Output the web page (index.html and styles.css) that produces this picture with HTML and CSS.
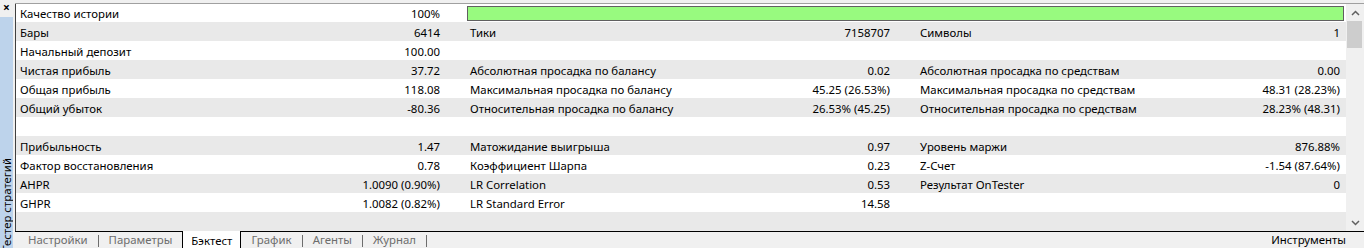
FILE: index.html
```html
<!DOCTYPE html>
<html>
<head>
    <title>Тестер стратегий</title>
    <link rel="stylesheet" href="styles.css">
</head>
<body>
<div class="window">
    <div class="side">
        <div class="close">&#215;</div>
        <div class="side-title"><span>Тестер стратегий</span></div>
    </div>
    <div class="main">
        <div class="panel">
            <div class="grid">
                <div class="row first">
                    <div class="cell"><span>Качество истории</span><span>100%</span></div>
                    <div class="quality"></div>
                </div>
                <div class="row">
                    <div class="cell"><span>Бары</span><span>6414</span></div>
                    <div class="cell"><span>Тики</span><span>7158707</span></div>
                    <div class="cell last"><span>Символы</span><span>1</span></div>
                </div>
                <div class="row">
                    <div class="cell"><span>Начальный депозит</span><span>100.00</span></div>
                </div>
                <div class="row">
                    <div class="cell"><span>Чистая прибыль</span><span>37.72</span></div>
                    <div class="cell"><span>Абсолютная просадка по балансу</span><span>0.02</span></div>
                    <div class="cell last"><span>Абсолютная просадка по средствам</span><span>0.00</span></div>
                </div>
                <div class="row">
                    <div class="cell"><span>Общая прибыль</span><span>118.08</span></div>
                    <div class="cell"><span>Максимальная просадка по балансу</span><span>45.25 (26.53%)</span></div>
                    <div class="cell last"><span>Максимальная просадка по средствам</span><span>48.31 (28.23%)</span></div>
                </div>
                <div class="row">
                    <div class="cell"><span>Общий убыток</span><span>-80.36</span></div>
                    <div class="cell"><span>Относительная просадка по балансу</span><span>26.53% (45.25)</span></div>
                    <div class="cell last"><span>Относительная просадка по средствам</span><span>28.23% (48.31)</span></div>
                </div>
                <div class="row"></div>
                <div class="row">
                    <div class="cell"><span>Прибыльность</span><span>1.47</span></div>
                    <div class="cell"><span>Матожидание выигрыша</span><span>0.97</span></div>
                    <div class="cell last"><span>Уровень маржи</span><span>876.88%</span></div>
                </div>
                <div class="row">
                    <div class="cell"><span>Фактор восстановления</span><span>0.78</span></div>
                    <div class="cell"><span>Коэффициент Шарпа</span><span>0.23</span></div>
                    <div class="cell last"><span>Z-Счет</span><span>-1.54 (87.64%)</span></div>
                </div>
                <div class="row">
                    <div class="cell"><span>AHPR</span><span>1.0090 (0.90%)</span></div>
                    <div class="cell"><span>LR Correlation</span><span>0.53</span></div>
                    <div class="cell last"><span>Результат OnTester</span><span>0</span></div>
                </div>
                <div class="row">
                    <div class="cell"><span>GHPR</span><span>1.0082 (0.82%)</span></div>
                    <div class="cell"><span>LR Standard Error</span><span>14.58</span></div>
                </div>
                <div class="row"></div>
            </div>
            <div class="scrollbar">
                <div class="arrow">
                    <svg width="9" height="6" viewBox="0 0 9 6"><path d="M1 5 L4.5 1.5 L8 5" fill="none" stroke="#606060" stroke-width="1.5"/></svg>
                </div>
                <div class="thumb"></div>
                <div class="track"></div>
                <div class="arrow">
                    <svg width="9" height="6" viewBox="0 0 9 6"><path d="M1 1 L4.5 4.5 L8 1" fill="none" stroke="#606060" stroke-width="1.5"/></svg>
                </div>
            </div>
        </div>
        <div class="tabs">
            <span class="tab">Настройки</span>
            <span class="sep"></span>
            <span class="tab">Параметры</span>
            <span class="tab active">Бэктест</span>
            <span class="tab">График</span>
            <span class="sep"></span>
            <span class="tab">Агенты</span>
            <span class="sep"></span>
            <span class="tab">Журнал</span>
            <span class="sep"></span>
            <span class="tools">Инструменты</span>
        </div>
    </div>
</div>
</body>
</html>
```

FILE: styles.css
```css
body {
    margin: 0;
    background: #f0f0f0;
    font-family: "Noto Sans", "Liberation Sans", sans-serif;
    font-size: 11.4px;
    color: #000;
}

.window {
    display: flex;
    height: 248px;
    width: 1364px;
    overflow: hidden;
}

/* left dock strip */
.side {
    width: 15px;
    display: flex;
    flex-direction: column;
}

.close {
    height: 17px;
    line-height: 16px;
    padding-left: 3px;
    font-size: 12px;
    font-weight: bold;
}

.side-title {
    flex: 1;
    width: 13px;
    background: #bdd3eb;
    display: flex;
    flex-direction: column;
    justify-content: flex-end;
    overflow: hidden;
}

.side-title span {
    writing-mode: vertical-rl;
    transform: rotate(180deg);
    line-height: 14px;
    white-space: nowrap;
    margin-bottom: -4px;
}

.main {
    flex: 1;
    display: flex;
    flex-direction: column;
    padding-top: 3px;
}

.panel {
    display: flex;
    height: 228px;
    border-top: 1px solid #a0a0a0;
}

.grid {
    flex: 1;
    background: #fff;
    border-left: 1px solid #404040;
}

.row {
    display: flex;
    height: 19px;
    line-height: 21px;
    white-space: nowrap;
}

.row.first {
    height: 18px;
    line-height: 20px;
}

.row:nth-child(even) {
    background: #e9e9e9;
}

.cell {
    width: 450px;
    height: 100%;
    display: flex;
    justify-content: space-between;
    padding: 0 26px 0 4px;
    box-sizing: border-box;
}

.cell.last {
    width: 430px;
    padding-right: 6px;
}

.quality {
    flex: 1;
    height: 13px;
    margin: 2px 2px 0 1px;
    background: #98fa7f;
    border: 1px solid #606060;
}

/* vertical scrollbar */
.scrollbar {
    width: 18px;
    display: flex;
    flex-direction: column;
    background: #f0f0f0;
}

.arrow {
    height: 17px;
    display: flex;
    align-items: center;
    justify-content: center;
}

.thumb {
    height: 27px;
    margin: 0 2px 0 1px;
    background: #cdcdcd;
}

.track {
    flex: 1;
}

/* bottom tabs */
.tabs {
    display: flex;
    align-items: center;
    height: 16px;
    border-top: 1px solid #000;
    padding-left: 13px;
    color: #6d6d6d;
}

.tab {
    line-height: 18px;
}

.sep {
    width: 1px;
    height: 12px;
    background: #6d6d6d;
    margin: 2px 10px 0 10px;
}

.tab.active {
    align-self: flex-start;
    margin: -1px 10px 0 10px;
    height: 17px;
    line-height: 19px;
    padding: 0 8px;
    background: #fff;
    border-left: 1px solid #000;
    border-right: 1px solid #000;
    color: #000;
}

.tools {
    margin-left: auto;
    padding-right: 18px;
    line-height: 18px;
    color: #000;
}
```
